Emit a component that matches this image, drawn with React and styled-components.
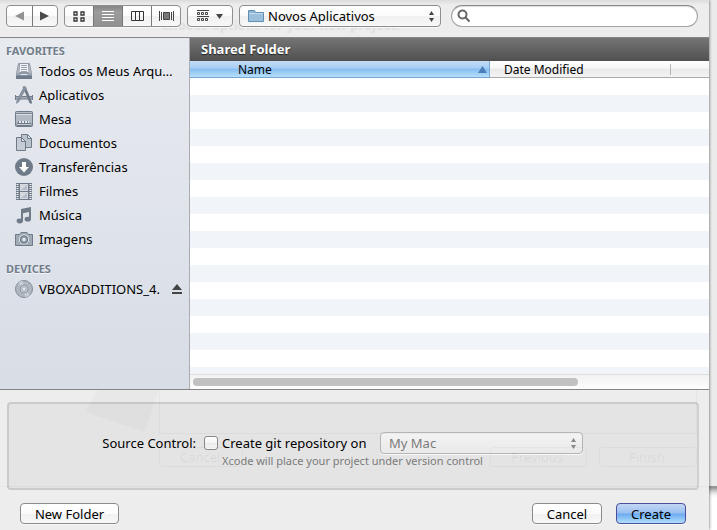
import React from "react";
import styled, { createGlobalStyle, css } from "styled-components";

const GlobalStyle = createGlobalStyle`
  *, *::before, *::after { box-sizing: border-box; }
  body {
    margin: 0;
    background: #fff;
    color: #000;
    font-family: "Lucida Grande", "Noto Sans", "Open Sans", sans-serif;
    font-size: 13px;
    line-height: 16px;
  }
  button, input, select { font: inherit; color: inherit; margin: 0; }
  svg { display: block; flex: none; }
`;

const Page = styled.div`
  position: relative;
  display: flex;
  flex-direction: column;
  min-height: 100vh;
  padding-right: 8px;
  overflow: hidden;
`;

const ParentWindow = styled.div`
  position: absolute;
  inset: 0 -20px 43px 0;
  background: #ebebeb;
  border-bottom: 1px solid #999;
  box-shadow: 0 2px 8px rgba(0, 0, 0, 0.65);
`;

const Sheet = styled.main`
  position: relative;
  isolation: isolate;
  flex: 1;
  display: flex;
  flex-direction: column;
  background: #ededed;
  box-shadow: 0 0 3px rgba(0, 0, 0, 0.65);
`;

const Toolbar = styled.header`
  position: relative;
  isolation: isolate;
  display: flex;
  gap: 6px;
  height: 38px;
  padding: 5px 11px 0 6px;
  border-bottom: 1px solid #858585;
  background: linear-gradient(#dcdcdc, #ededed 5px);
`;

const GhostTitle = styled.div`
  position: absolute;
  z-index: -1;
  left: 161px;
  top: 17px;
  color: #e0e0e0;
  font-weight: 700;
  white-space: nowrap;
`;

const controlFace = css`
  border: 1px solid #8f8f8f;
  border-radius: 4px;
  background: linear-gradient(#fff, #fbfbfb 50%, #f0f0f0 51%, #f8f8f8);
  box-shadow: 0 1px 0 #f8f8f8;
`;

const Segments = styled.div`
  ${controlFace}
  display: flex;
  flex: none;
  width: ${(p) => p.$width}px;
  height: 22px;
  overflow: hidden;
`;

const Segment = styled.button`
  display: flex;
  flex: 1;
  align-items: center;
  justify-content: center;
  padding: 0;
  border: 0;
  background: ${(p) => (p.$active ? "linear-gradient(#858585, #9c9c9c 30%, #909090)" : "none")};

  & + & { border-left: 1px solid ${(p) => (p.$active ? "#777" : "#c4c4c4")}; }
`;

const Popup = styled.div`
  ${controlFace}
  display: flex;
  flex: none;
  align-items: center;
  position: relative;
  width: ${(p) => p.$width}px;
  height: 22px;
  padding: 0 5px 0 8px;
  ${(p) => p.$dim && "color: #7b7b7b; border-color: #b5b5b5; background: linear-gradient(#f3f3f3, #e9e9e9);"}
`;

const PopupSelect = styled.select`
  flex: 1;
  min-width: 0;
  height: 20px;
  padding: 0 0 0 ${(p) => (p.$iconic ? 4 : 0)}px;
  border: 0;
  appearance: none;
  background: none;
  outline: none;
  opacity: 1;
  line-height: 18px;
`;

const SearchField = styled.label`
  display: flex;
  flex: 1;
  align-items: center;
  height: 22px;
  margin-left: 4px;
  padding: 0 8px 0 5px;
  border: 1px solid #a3a3a3;
  border-top-color: #888;
  border-radius: 11px;
  background: #fff;
  box-shadow: inset 0 1px 1px #ddd;
`;

const SearchInput = styled.input`
  flex: 1;
  min-width: 0;
  padding: 0 4px;
  border: 0;
  outline: none;
  background: none;
`;

const Browser = styled.div`
  display: flex;
  flex: 1;
  border-bottom: 1px solid #858585;
`;

const Sidebar = styled.nav`
  flex: none;
  width: 190px;
  padding-top: 4px;
  border-right: 1px solid #a9adb3;
  background: linear-gradient(#e7eaef, #d8dde6);
`;

const SectionTitle = styled.h2`
  margin: 0;
  padding-left: 6px;
  color: #717d8a;
  font-size: 11px;
  font-weight: 700;
  line-height: 17px;
  text-shadow: 0 1px 0 #f3f5f8;
`;

const PlaceList = styled.ul`
  margin: 0 0 9px;
  padding: 0;
  list-style: none;
`;

const Place = styled.li`
  display: flex;
  align-items: center;
  height: 24px;
  padding: 0 6px 0 14px;
`;

const PlaceLink = styled.a`
  display: flex;
  flex: 1;
  align-items: center;
  gap: 5px;
  color: #000;
  text-decoration: none;
  white-space: nowrap;
`;

const IconButton = styled.button`
  padding: 0;
  border: 0;
  background: none;
`;

const FilePane = styled.section`
  display: flex;
  flex: 1;
  flex-direction: column;
  min-width: 0;
`;

const FolderTitle = styled.h1`
  margin: 0;
  height: 23px;
  padding-left: 11px;
  background: linear-gradient(#757575, #505050);
  color: #fff;
  font-size: 13px;
  font-weight: 700;
  line-height: 23px;
  text-shadow: 0 1px 1px #222;
`;

const FileArea = styled.div`
  flex: 1;
  background: repeating-linear-gradient(#fff 0 17px, #f1f5fa 17px 34px);
`;

const FileTable = styled.table`
  width: 100%;
  border-collapse: separate;
  border-spacing: 0;
  table-layout: fixed;
`;

const ColumnHead = styled.th`
  width: ${(p) => p.$width};
  height: 17px;
  padding: 0 0 0 ${(p) => (p.$sorted ? 48 : 14)}px;
  border-bottom: 1px solid ${(p) => (p.$sorted ? "#76a6d3" : "#aaa")};
  border-right: ${(p) => (p.$sorted ? 1 : 0)}px solid #7ba9d8;
  background: ${(p) =>
    p.$sorted
      ? "linear-gradient(#c4ddf6, #a5cef5 45%, #87bdf0 50%, #b6e0fa)"
      : "linear-gradient(#fff, #f7f7f7 45%, #eaeaea 50%, #f3f3f3)"};
  font-size: 12px;
  font-weight: 400;
  line-height: 15px;
  text-align: left;
`;

const HeadContent = styled.div`
  display: flex;
  align-items: center;
  justify-content: space-between;
  height: 15px;
  padding-right: 2px;
`;

const HeadDivider = styled.span`
  width: 1px;
  height: 11px;
  margin-right: -2px;
  background: #b5b5b5;
`;

const ScrollTrack = styled.div`
  height: 15px;
  padding: 3px;
  border-top: 1px solid #dedede;
  background: linear-gradient(#f2f2f2, #fdfdfd);
`;

const ScrollThumb = styled.div`
  width: 75%;
  height: 8px;
  border-radius: 4px;
  background: #c1c1c1;
`;

const Footer = styled.footer`
  position: relative;
  padding: 12px 10px 6px 7px;
`;

const Ghosts = styled.svg`
  position: absolute;
  top: 0;
  right: 0;
  pointer-events: none;
`;

const Options = styled.div`
  display: grid;
  grid-template-columns: 187px 1fr;
  column-gap: 8px;
  align-content: start;
  height: 88px;
  padding-top: 28px;
  border: 2px solid #cbcbcb;
  border-right-color: #d0d0d0;
  border-radius: 4px;
  background: #e4e4e4;
`;

const OptionLabel = styled.div`
  text-align: right;
  line-height: 22px;
`;

const OptionRow = styled.div`
  display: flex;
  align-items: center;
  height: 22px;
`;

const CheckLabel = styled.label`
  display: flex;
  align-items: center;
  gap: 4px;
  width: 176px;
  white-space: nowrap;
`;

const Check = styled.input`
  flex: none;
  appearance: none;
  width: 14px;
  height: 14px;
  border: 1px solid #888;
  border-radius: 3px;
  background: linear-gradient(#fff, #f4f4f4 50%, #e9e9e9 51%, #fafafa);
`;

const Hint = styled.p`
  grid-column: 2;
  margin: 0;
  padding-left: 18px;
  color: #7b7b7b;
  font-size: 11px;
  line-height: 14px;
`;

const Actions = styled.div`
  display: flex;
  gap: 14px;
  padding: 13px 13px 0;
`;

const PushButton = styled.button`
  ${controlFace}
  width: ${(p) => (p.$wide ? 99 : 70)}px;
  height: 21px;
  padding: 0;
  border-color: #8b8b8b;
  line-height: 18px;
  ${(p) => p.$first && "margin-right: auto;"}
  ${(p) =>
    p.$primary &&
    "border-color: #4b4f9e; background: linear-gradient(#c3d7f4, #98bff0 48%, #6baaf0 52%, #b1defb);"}
`;

const Svg = ({ w = 20, h = 20, children }) => (
  <svg width={w} height={h} viewBox={`0 0 ${w} ${h}`} aria-hidden="true">{children}</svg>
);

const Stepper = ({ color = "#444" }) => (
  <Svg w={7} h={11}>
    <path d="M3.5 0 6 4H1zM3.5 11 6 7H1z" fill={color} />
  </Svg>
);

const ink = "#6f7b89";

const icons = {
  all: (
    <Svg>
      <path d="M4.500 2.500h11l2 10h-15z" fill="#c5ccd4" stroke="#8e99a5" />
      <path d="M5.500 2.500h9l.5 9H5z" fill="#f1f3f6" stroke="#8e99a5" />
      <path d="M7 4.500h6M7 6.500h6M7 8.500h6M7 10.500h6" stroke="#9aa4af" />
      <path d="M2 12h4l1 2h6l1-2h4v5.500q0 .5-1 .5H3q-1 0-1-.5z" fill="#99a3ae" />
      <path d="M2 14.500h16v3q0 .5-1 .5H3q-1 0-1-.5z" fill={ink} />
    </Svg>
  ),
  apps: (
    <Svg>
      <path d="M1 11h18v3H1z" fill="#a7b0ba" />
      <path d="M1 11.500h18M1 14h18" stroke={ink} />
      <path d="M1.500 10v5M18.500 10v5" stroke={ink} />
      <path d="M8.500 1.500h3L18 17l-.5 2-2-1z" fill={ink} />
      <path d="M10.500 1.500h1.500l.5 2L5 17l-3 2 .5-3.500L9 3z" fill="#8691a0" />
      <path d="m10.500 7 1.600 4H8.300z" fill="#e3e7ec" />
    </Svg>
  ),
  desk: (
    <Svg>
      <rect x="1.500" y="2.500" width="17" height="15" rx="1" fill="#b2bac4" stroke={ink} />
      <path d="M2 4.500h16" stroke="#7b8794" />
      <path d="M2 5.500h16" stroke="#d9dee4" />
      <path d="M4.500 12h11l2 3.500v1.500h-15v-1.500z" fill={ink} />
      <path d="M5 12h2v2H5zM8 12h2v2H8zM11 12h2v2h-2zM14 12h1.500v2H14z" fill="#e9edf1" />
      <path d="M3 15.500h14" stroke="#c5ccd4" />
    </Svg>
  ),
  docs: (
    <Svg>
      <path d="M7.500 1.500h6l4 4v9h-10z" fill="#bbc3cc" stroke={ink} />
      <path d="M13.500 1.500v4h4z" fill="#e1e5ea" stroke={ink} />
      <path d="M2.500 4.500h5l4 4v9h-9z" fill="#c5ccd4" stroke={ink} />
      <path d="M7.500 4.500v4h4z" fill="#e1e5ea" stroke={ink} />
    </Svg>
  ),
  down: (
    <Svg>
      <circle cx="10" cy="10" r="9" fill={ink} />
      <path d="M8 5h4v5h3l-5 5.500L5 10h3z" fill="#fff" />
    </Svg>
  ),
  film: (
    <Svg>
      <path d="M2 2h16v17H2z" fill={ink} />
      <path d="M6 3h8v7H6zM6 11h8v7H6z" fill="#d3d9df" />
      <path d="M7 9 13 4v5zM7 17l6-5v5z" fill="#b5bec8" />
      <path d="M3.500 3v15M16.500 3v15" stroke="#f0f2f5" strokeWidth="2" strokeDasharray="1 1" />
    </Svg>
  ),
  music: (
    <Svg>
      <path d="M7 4 17 2v12h-2V7L9 8.300V16H7z" fill={ink} />
      <ellipse cx="5.800" cy="16" rx="3.200" ry="2.400" fill={ink} />
      <ellipse cx="13.800" cy="14.200" rx="3.200" ry="2.400" fill={ink} />
    </Svg>
  ),
  photo: (
    <Svg>
      <path d="M1.500 5.500h4l1.500-2h6l1.500 2h4v11h-17z" fill="#a1abb6" stroke={ink} strokeLinejoin="round" />
      <circle cx="10" cy="10.500" r="5" fill="#e9ecf0" />
      <circle cx="10" cy="10.500" r="3.500" fill="#a1abb6" stroke={ink} strokeWidth="1.500" />
      <circle cx="10" cy="10.500" r="1.500" fill="#e9ecf0" />
    </Svg>
  ),
  disc: (
    <Svg>
      <circle cx="10" cy="10" r="8.500" fill="#afb7c0" stroke="#848e99" />
      <path d="M10 10 4 4a8 8 0 0 1 5-2zM10 10l6 6a8 8 0 0 1-5 2z" fill="#c6cdd4" />
      <circle cx="10" cy="10" r="4" fill="#c3cad1" stroke="#8f99a4" />
      <circle cx="10" cy="10" r="2" fill="#e4e8ec" stroke="#aab3bc" />
    </Svg>
  ),
};

const favorites = [
  ["all", "Todos os Meus Arqu…"],
  ["apps", "Aplicativos"],
  ["desk", "Mesa"],
  ["docs", "Documentos"],
  ["down", "Transferências"],
  ["film", "Filmes"],
  ["music", "Música"],
  ["photo", "Imagens"],
];

const PlaceItem = ({ icon, name, children }) => (
  <Place>
    <PlaceLink href="#">{icons[icon]}{name}</PlaceLink>
    {children}
  </Place>
);

export default function App() {
  return (
    <Page>
      <GlobalStyle />
      <ParentWindow />
      <Sheet>
        <Toolbar>
          <Segments $width={52}>
            <Segment aria-label="Back">
              <Svg w={9} h={10}><path d="M0 5 9 .5v9z" fill="#929292" /></Svg>
            </Segment>
            <Segment aria-label="Forward">
              <Svg w={9} h={10}><path d="M9 5 0 .5v9z" fill="#4a4a4a" /></Svg>
            </Segment>
          </Segments>
          <Segments $width={117}>
            <Segment aria-label="Icon view">
              <Svg w={12} h={11}>
                <path d="M1 1h3v3H1zM8 1h3v3H8zM1 7h3v3H1zM8 7h3v3H8z" fill="none" stroke="#333" strokeWidth="1.300" />
              </Svg>
            </Segment>
            <Segment $active aria-label="List view" aria-pressed="true">
              <Svg w={12} h={11}><path d="M0 .5h12M0 3.500h12M0 6.500h12M0 9.500h12" stroke="#fff" /></Svg>
            </Segment>
            <Segment aria-label="Column view">
              <Svg w={13} h={11}><path d="M.5.5h12v9H.5zM4.500 1v9M8.500 1v9" fill="none" stroke="#333" /></Svg>
            </Segment>
            <Segment aria-label="Cover flow view">
              <Svg w={15} h={11}>
                <path d="M.5 0v10M2.500 1v8M12.500 1v8M14.500 0v10" stroke="#444" />
                <path d="M4.500 1.500h6v7h-6z" fill="#777" stroke="#444" />
              </Svg>
            </Segment>
          </Segments>
          <Segments $width={46}>
            <Segment aria-label="Arrange">
              <Svg w={26} h={12}>
                <path d="M0 .5h12M0 6.500h12" stroke="#444" />
                <path d="M.5 2.500h2v2h-2zM4.500 2.500h2v2h-2zM8.500 2.500h2v2h-2zM.5 8.500h2v2h-2zM4.500 8.500h2v2h-2zM8.500 8.500h2v2h-2z" fill="none" stroke="#444" />
                <path d="M19 4h7l-3.500 5z" fill="#444" />
              </Svg>
            </Segment>
          </Segments>
          <Popup $width={202}>
            <Svg w={16} h={14}>
              <path d="M.5 12.500v-11h6l1 2h8v9z" fill="#8fb5d2" stroke="#5f8fb5" />
              <path d="M1 5h14v7H1z" fill="#9cc0dc" />
              <path d="M1 4.500h14" stroke="#c2dbed" />
            </Svg>
            <PopupSelect $iconic aria-label="Folder" defaultValue="n">
              <option value="n">Novos Aplicativos</option>
            </PopupSelect>
            <Stepper />
          </Popup>
          <SearchField>
            <Svg w={13} h={14}>
              <circle cx="5.500" cy="5.500" r="4" fill="none" stroke="#666" strokeWidth="2" />
              <path d="m8.500 8.500 4 4" stroke="#666" strokeWidth="2.200" />
            </Svg>
            <SearchInput type="search" aria-label="Search" />
          </SearchField>
          <GhostTitle aria-hidden="true">Choose options for your new project:</GhostTitle>
        </Toolbar>

        <Browser>
          <Sidebar aria-label="Places">
            <SectionTitle>FAVORITES</SectionTitle>
            <PlaceList>
              {favorites.map(([icon, name]) => <PlaceItem key={name} icon={icon} name={name} />)}
            </PlaceList>
            <SectionTitle>DEVICES</SectionTitle>
            <PlaceList>
              <PlaceItem icon="disc" name="VBOXADDITIONS_4.">
                <IconButton aria-label="Eject">
                  <Svg w={12} h={11}><path d="M6 0l5 6H1zM1 8h10v2H1z" fill="#444" /></Svg>
                </IconButton>
              </PlaceItem>
            </PlaceList>
          </Sidebar>
          <FilePane>
            <FolderTitle>Shared Folder</FolderTitle>
            <FileTable>
              <thead>
                <tr>
                  <ColumnHead $sorted $width="300px" aria-sort="ascending">
                    <HeadContent>
                      Name
                      <Svg w={9} h={7}><path d="M4.500 0 9 7H0z" fill="#4c7fba" /></Svg>
                    </HeadContent>
                  </ColumnHead>
                  <ColumnHead $width="181px">
                    <HeadContent>Date Modified<HeadDivider /></HeadContent>
                  </ColumnHead>
                  <ColumnHead $width="auto" />
                </tr>
              </thead>
            </FileTable>
            <FileArea />
            <ScrollTrack><ScrollThumb /></ScrollTrack>
          </FilePane>
        </Browser>

        <Footer>
          <Options>
            <OptionLabel>Source Control:</OptionLabel>
            <OptionRow>
              <CheckLabel><Check type="checkbox" />Create git repository on</CheckLabel>
              <Popup $width={203} $dim>
                <PopupSelect disabled aria-label="Repository location">
                  <option>My Mac</option>
                </PopupSelect>
                <Stepper color="#888" />
              </Popup>
            </OptionRow>
            <Hint>Xcode will place your project under version control</Hint>
          </Options>
          <Ghosts width="709" height="100" viewBox="0 0 709 100" aria-hidden="true">
            <path d="M98 0h61l-14 42-60-20z" fill="#000" opacity="0.02" />
            <g fill="none" stroke="#000" strokeOpacity="0.03">
              <path d="M159.500 0v43.500h537V0M0 96.500h709" />
              <rect x="159.500" y="57.500" width="83" height="19" rx="3" />
              <rect x="490.500" y="57.500" width="96" height="19" rx="3" />
              <rect x="599.500" y="57.500" width="97" height="19" rx="3" />
            </g>
            <g fill="#000" fillOpacity="0.06" fontSize="13">
              <text x="180" y="72">Cancel</text>
              <text x="511" y="72">Previous</text>
              <text x="629" y="72">Finish</text>
            </g>
          </Ghosts>
          <Actions>
            <PushButton $wide $first>New Folder</PushButton>
            <PushButton>Cancel</PushButton>
            <PushButton $primary>Create</PushButton>
          </Actions>
        </Footer>
      </Sheet>
    </Page>
  );
}
